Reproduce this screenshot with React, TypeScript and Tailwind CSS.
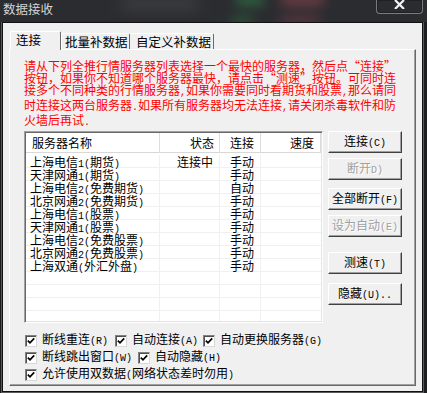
import React from 'react';

// ascii runs get a 6px-per-char mono face, like SimSun half-width glyphs
function Txt({ s }: { s: string }) {
  const parts = s.match(/[\x20-\x7e]+|[^\x20-\x7e]+/g) ?? [];
  return (
    <>
      {parts.map((p, i) =>
        /[\x20-\x7e]/.test(p) ? (
          <span key={i} className="font-['Liberation_Mono',monospace] text-[10px]">{p}</span>
        ) : (
          <span key={i}>{p}</span>
        )
      )}
    </>
  );
}

const OpenQ = () => <span className="inline-block w-[12px] text-right">“</span>;
const CloseQ = () => <span className="inline-block w-[12px] text-left">”</span>;

const ROWS: Array<[string, string, string]> = [
  ['上海电信1(期货)', '连接中', '手动'],
  ['天津网通1(期货)', '', '手动'],
  ['上海电信2(免费期货)', '', '自动'],
  ['北京网通2(免费期货)', '', '手动'],
  ['上海电信1(股票)', '', '手动'],
  ['天津网通1(股票)', '', '手动'],
  ['上海电信2(免费股票)', '', '手动'],
  ['北京网通2(免费股票)', '', '手动'],
  ['上海双通(外汇外盘)', '', '手动'],
  ['', '', ''],
  ['', '', ''],
  ['', '', ''],
  ['', '', ''],
];

function Btn({ label, disabled, className }: { label: string; disabled?: boolean; className?: string }) {
  return (
    <div
      className={`h-[22px] w-[74px] flex items-center justify-center bg-[#f0f0f0] border border-t-white border-l-white border-r-[#404040] border-b-[#404040] shadow-[inset_-1px_-1px_0_#a0a0a0] ${
        disabled ? 'text-[#a0a0a0] [text-shadow:1px_1px_0_#ffffff]' : 'text-black'
      } ${className ?? ''}`}
    >
      <span className="leading-[12px]">
        <Txt s={label} />
      </span>
    </div>
  );
}

function Check({ label, className }: { label: string; className?: string }) {
  return (
    <div className={`flex items-center ${className ?? ''}`}>
      <span className="w-[12px] h-[12px] shrink-0 bg-white border border-t-[#808080] border-l-[#808080] border-r-[#d8d8d8] border-b-[#d8d8d8] shadow-[inset_1px_1px_0_#505050] flex items-center justify-center">
        <svg width="8" height="8" viewBox="0 0 8 8">
          <path d="M0.8 3.6 L3 5.8 L7.2 1.4" fill="none" stroke="#000" strokeWidth="1.7" />
        </svg>
      </span>
      <span className="ml-[5px] whitespace-nowrap leading-[12px]">
        <Txt s={label} />
      </span>
    </div>
  );
}

export default function App() {
  return (
    <div className="w-[427px] h-[393px] bg-[#1d1e22] overflow-hidden flex flex-col text-[12px] leading-[12px] text-black font-['Noto_Sans_CJK_SC','Noto_Sans',sans-serif]">
      {/* title bar */}
      <div className="relative h-[22px] shrink-0 flex items-start justify-between overflow-hidden bg-[#2b2c30]">
        <div className="absolute left-[235px] top-[-6px] w-[30px] h-[12px] rounded-full bg-[#2f7a45] blur-[6px] opacity-70" />
        <div className="absolute left-[280px] top-[-6px] w-[45px] h-[12px] rounded-full bg-[#8a4550] blur-[6px] opacity-70" />
        <div className="absolute left-[280px] top-[16px] w-[40px] h-[10px] rounded-full bg-[#7a3e48] blur-[6px] opacity-60" />
        <div className="absolute left-[230px] top-[16px] w-[24px] h-[10px] rounded-full bg-[#2f6a40] blur-[6px] opacity-60" />
        <div className="absolute left-[120px] top-[-4px] w-[80px] h-[14px] rounded-full bg-[#3e3f44] blur-[8px]" />
        <span className="relative ml-[3px] mt-[2px] text-[12.5px] leading-[14px] text-[#d4d4d4]">数据接收</span>
        <div className="relative mr-[4px] w-[47px] h-[14px] rounded-b-[4px] border border-t-0 border-[#7c7c7c] shadow-[inset_0_0_0_1px_#202020] flex justify-center">
          <svg width="11" height="9" viewBox="0 0 11 9">
            <path d="M1 0 L10 9 M10 0 L1 9" stroke="#f2f2f2" strokeWidth="2.2" />
          </svg>
        </div>
      </div>

      {/* dialog client */}
      <div className="ml-[2px] w-[421px] h-[370px] shrink-0 bg-[#f0f0f0] border border-[#121212] shadow-[0_0_0_1px_#5a5a5a] flex flex-col px-[6px] pt-[8px]">
        {/* tabs */}
        <div className="flex items-end h-[18px] shrink-0">
          <div className="relative z-10 ml-[1px] w-[51px] h-[19px] -mb-px bg-[#f0f0f0] border-l border-t border-r border-l-white border-t-white border-r-[#696969] rounded-t-[2px] pl-[5px] pt-[2px] text-[12.5px]">
            连接
          </div>
          <div className="w-[69px] h-[16px] border-l border-t border-r border-l-white border-t-white border-r-[#696969] rounded-t-[2px] pl-[3px] pt-[2px] text-[12.5px]">
            批量补数据
          </div>
          <div className="w-[84px] h-[16px] border-t border-r border-t-white border-r-[#696969] rounded-t-[2px] pl-[6px] pt-[2px] text-[12.5px]">
            自定义补数据
          </div>
        </div>

        {/* tab panel */}
        <div className="h-[337px] shrink-0 border border-t-white border-l-white border-r-[#696969] border-b-[#696969] shadow-[inset_-1px_-1px_0_#a0a0a0] pl-[14px] pt-[10px] flex flex-col">
          <div className="text-[#ff0000] whitespace-nowrap leading-[12px]">
            <div>
              请从下列全推行情服务器列表选择一个最快的服务器，然后点<OpenQ />连接<CloseQ />
            </div>
            <div>
              按钮，如果你不知道哪个服务器最快，请点击<OpenQ />测速<CloseQ />按钮。可同时连
            </div>
            <div>
              <Txt s="接多个不同种类的行情服务器,如果你需要同时看期货和股票,那么请同" />
            </div>
            <div>
              <Txt s="时连接这两台服务器.如果所有服务器均无法连接,请关闭杀毒软件和防" />
            </div>
            <div>
              <Txt s="火墙后再试." />
            </div>
          </div>

          <div className="flex mt-[2px]">
            {/* server list */}
            <div className="w-[299px] h-[192px] bg-white border border-t-[#a0a0a0] border-l-[#a0a0a0] border-r-white border-b-white shadow-[inset_1px_1px_0_#696969,inset_-1px_-1px_0_#e3e3e3] overflow-hidden">
              <div className="m-[1px] h-[188px] overflow-hidden">
                <div className="grid grid-cols-[134px_60px_41px_60px] h-[20px] border-b border-[#d8d8d8] bg-white">
                  <div className="flex items-center pl-[6px] border-r border-[#dcdcdc]">服务器名称</div>
                  <div className="flex items-center justify-end pr-[5px] border-r border-[#dcdcdc]">状态</div>
                  <div className="flex items-center pl-[10px] border-r border-[#dcdcdc]">连接</div>
                  <div className="flex items-center justify-end pr-[6px] border-r border-[#dcdcdc]">速度</div>
                </div>
                <div className="pt-[2px]">
                  {ROWS.map((r, i) => (
                    <div key={i} className="grid grid-cols-[134px_60px_41px_60px] h-[13px] border-b border-[#f0f0f0] leading-[13px]">
                      <div className="pl-[4px] border-r border-[#f0f0f0] whitespace-nowrap">
                        <Txt s={r[0]} />
                      </div>
                      <div className="text-right pr-[6px] border-r border-[#f0f0f0]">{r[1]}</div>
                      <div className="pl-[10px] border-r border-[#f0f0f0]">{r[2]}</div>
                      <div />
                    </div>
                  ))}
                </div>
              </div>
            </div>

            {/* action buttons */}
            <div className="ml-[5px] flex flex-col">
              <Btn label="连接(C)" />
              <Btn label="断开D)" disabled className="mt-[5px]" />
              <Btn label="全部断开(F)" className="mt-[8px]" />
              <Btn label="设为自动(E)" disabled className="mt-[5px]" />
              <Btn label="测速(T)" className="mt-[15px]" />
              <Btn label="隐藏(U).." className="mt-[9px]" />
            </div>
          </div>

          {/* options */}
          <div className="mt-[9px] ml-[1px] flex flex-col">
            <div className="flex h-[17px] items-center">
              <Check label="断线重连(R)" className="w-[90px]" />
              <Check label="自动连接(A)" className="w-[88px]" />
              <Check label="自动更换服务器(G)" />
            </div>
            <div className="flex h-[17px] items-center">
              <Check label="断线跳出窗口(W)" className="w-[113px]" />
              <Check label="自动隐藏(H)" />
            </div>
            <div className="flex h-[17px] items-center">
              <Check label="允许使用双数据(网络状态差时勿用)" />
            </div>
          </div>
        </div>
      </div>
    </div>
  );
}
